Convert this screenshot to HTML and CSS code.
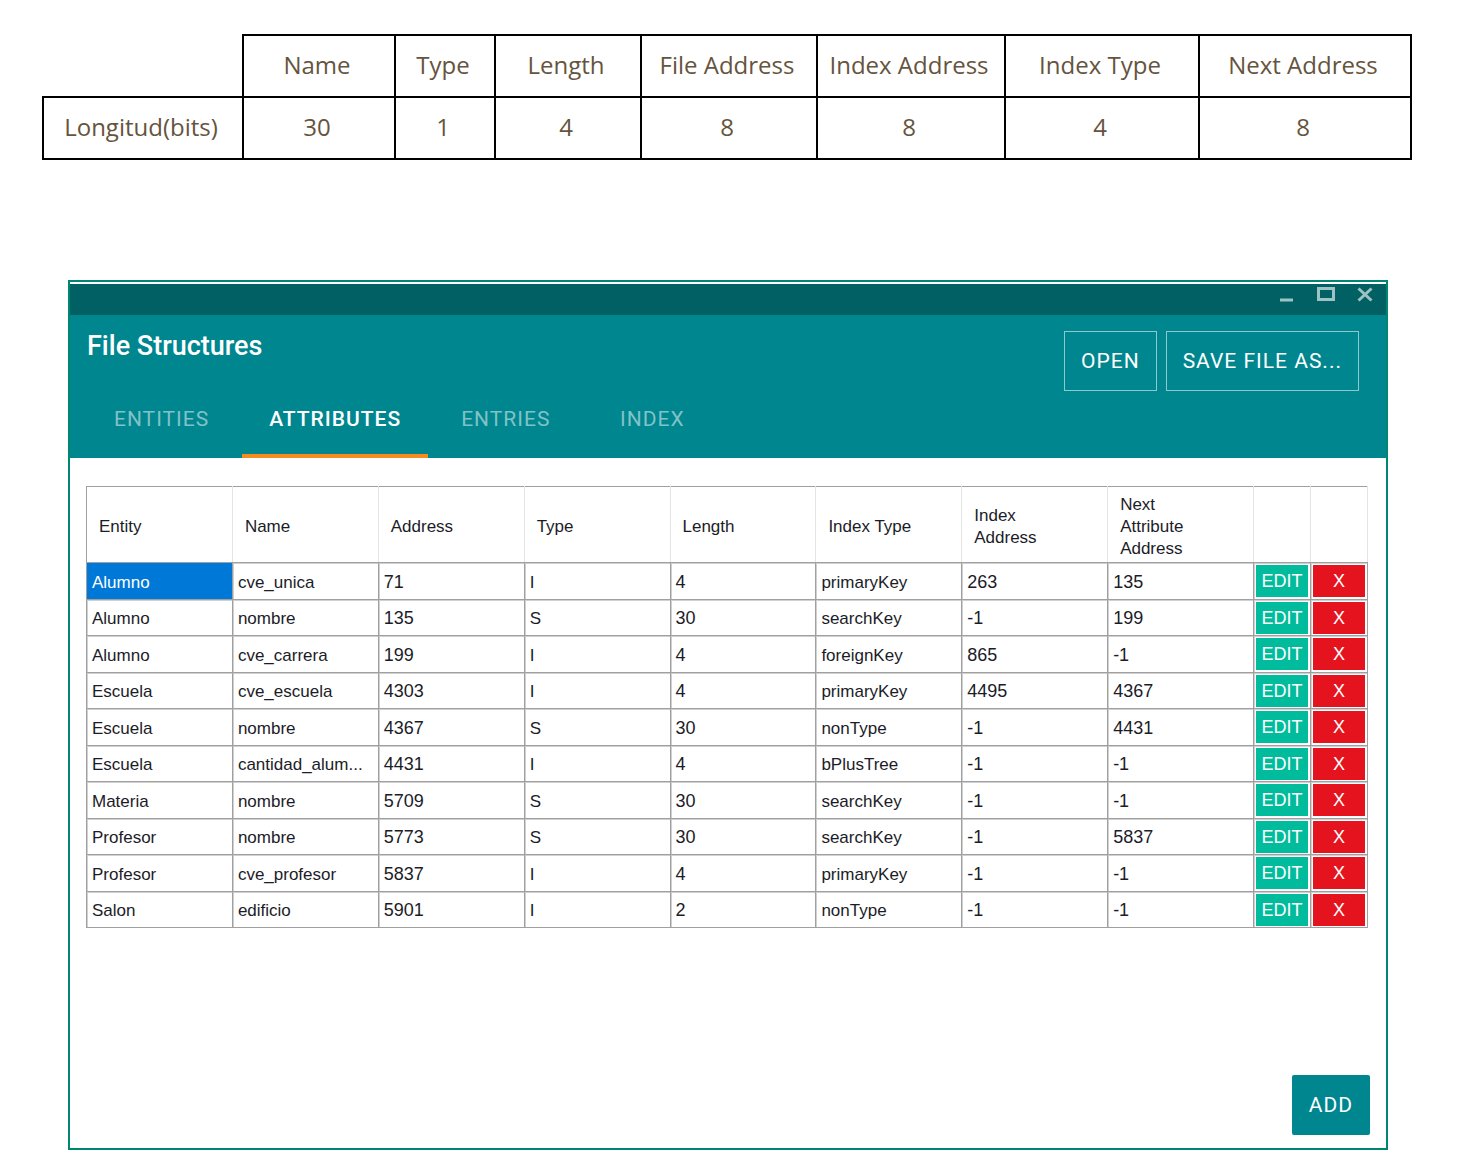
FILE: index.html
```html
<!DOCTYPE html>
<html lang="es">
<head>
<meta charset="utf-8">
<meta name="viewport" content="width=device-width, initial-scale=1">
<title>File Structures</title>
<link rel="stylesheet" href="styles.css">
</head>
<body>
<table class="layout-table">
  <colgroup>
    <col class="w-label"><col class="w-name"><col class="w-type"><col class="w-length"><col class="w-file"><col class="w-index"><col class="w-index-type"><col class="w-next">
  </colgroup>
  <thead>
    <tr><td class="blank"></td><th scope="col">Name</th><th scope="col">Type</th><th scope="col">Length</th><th scope="col">File Address</th><th scope="col">Index Address</th><th scope="col">Index Type</th><th scope="col">Next Address</th></tr>
  </thead>
  <tbody>
    <tr><th scope="row">Longitud(bits)</th><td>30</td><td>1</td><td>4</td><td>8</td><td>8</td><td>4</td><td>8</td></tr>
  </tbody>
</table>

<main class="window">
  <div class="titlebar">
    <button class="win-btn" type="button" aria-label="Minimize"><svg width="18" height="18" viewBox="0 0 18 18"><path d="M2 14h13"/></svg></button>
    <button class="win-btn" type="button" aria-label="Maximize"><svg width="18" height="18" viewBox="0 0 18 18"><path d="M1.500 2.500h15v11h-15z"/></svg></button>
    <button class="win-btn" type="button" aria-label="Close"><svg width="18" height="18" viewBox="0 0 18 18"><path d="M2.500 2.500l13 12M15.500 2.500l-13 12"/></svg></button>
  </div>
  <header class="header">
    <div class="heading">
      <h1 class="title">File Structures</h1>
      <nav class="tabs">
        <a class="tab" href="#entities">ENTITIES</a>
        <a class="tab tab-active" href="#attributes" aria-current="page">ATTRIBUTES</a>
        <a class="tab" href="#entries">ENTRIES</a>
        <a class="tab" href="#index">INDEX</a>
      </nav>
    </div>
    <div class="actions">
      <button class="btn btn-outline" type="button">OPEN</button>
      <button class="btn btn-outline" type="button">SAVE FILE AS...</button>
    </div>
  </header>
  <section class="content">
    <table class="grid">
      <colgroup><col span="8"><col class="w-action" span="2"></colgroup>
      <thead>
        <tr><th scope="col">Entity</th><th scope="col">Name</th><th scope="col">Address</th><th scope="col">Type</th><th scope="col">Length</th><th scope="col">Index Type</th><th scope="col">Index<br>Address</th><th scope="col">Next<br>Attribute<br>Address</th><td></td><td></td></tr>
      </thead>
      <tbody>
        <tr><td class="selected">Alumno</td><td>cve_unica</td><td class="num">71</td><td>I</td><td class="num">4</td><td>primaryKey</td><td class="num">263</td><td class="num">135</td><td class="act"><button class="edit" type="button">EDIT</button></td><td class="act"><button class="delete" type="button">X</button></td></tr>
        <tr><td>Alumno</td><td>nombre</td><td class="num">135</td><td>S</td><td class="num">30</td><td>searchKey</td><td class="num">-1</td><td class="num">199</td><td class="act"><button class="edit" type="button">EDIT</button></td><td class="act"><button class="delete" type="button">X</button></td></tr>
        <tr><td>Alumno</td><td>cve_carrera</td><td class="num">199</td><td>I</td><td class="num">4</td><td>foreignKey</td><td class="num">865</td><td class="num">-1</td><td class="act"><button class="edit" type="button">EDIT</button></td><td class="act"><button class="delete" type="button">X</button></td></tr>
        <tr><td>Escuela</td><td>cve_escuela</td><td class="num">4303</td><td>I</td><td class="num">4</td><td>primaryKey</td><td class="num">4495</td><td class="num">4367</td><td class="act"><button class="edit" type="button">EDIT</button></td><td class="act"><button class="delete" type="button">X</button></td></tr>
        <tr><td>Escuela</td><td>nombre</td><td class="num">4367</td><td>S</td><td class="num">30</td><td>nonType</td><td class="num">-1</td><td class="num">4431</td><td class="act"><button class="edit" type="button">EDIT</button></td><td class="act"><button class="delete" type="button">X</button></td></tr>
        <tr><td>Escuela</td><td>cantidad_alum...</td><td class="num">4431</td><td>I</td><td class="num">4</td><td>bPlusTree</td><td class="num">-1</td><td class="num">-1</td><td class="act"><button class="edit" type="button">EDIT</button></td><td class="act"><button class="delete" type="button">X</button></td></tr>
        <tr><td>Materia</td><td>nombre</td><td class="num">5709</td><td>S</td><td class="num">30</td><td>searchKey</td><td class="num">-1</td><td class="num">-1</td><td class="act"><button class="edit" type="button">EDIT</button></td><td class="act"><button class="delete" type="button">X</button></td></tr>
        <tr><td>Profesor</td><td>nombre</td><td class="num">5773</td><td>S</td><td class="num">30</td><td>searchKey</td><td class="num">-1</td><td class="num">5837</td><td class="act"><button class="edit" type="button">EDIT</button></td><td class="act"><button class="delete" type="button">X</button></td></tr>
        <tr><td>Profesor</td><td>cve_profesor</td><td class="num">5837</td><td>I</td><td class="num">4</td><td>primaryKey</td><td class="num">-1</td><td class="num">-1</td><td class="act"><button class="edit" type="button">EDIT</button></td><td class="act"><button class="delete" type="button">X</button></td></tr>
        <tr><td>Salon</td><td>edificio</td><td class="num">5901</td><td>I</td><td class="num">2</td><td>nonType</td><td class="num">-1</td><td class="num">-1</td><td class="act"><button class="edit" type="button">EDIT</button></td><td class="act"><button class="delete" type="button">X</button></td></tr>
      </tbody>
    </table>
    <button class="btn btn-add" type="button">ADD</button>
  </section>
</main>
</body>
</html>
```
FILE: styles.css
```css
* {
  box-sizing: border-box;
}

body {
  margin: 0;
  min-height: 100vh;
  padding: 34px 52px 18px 42px;
  display: flex;
  flex-direction: column;
  background: #fff;
}

button {
  margin: 0;
  padding: 0;
  border: 0;
  background: none;
  font: inherit;
  color: inherit;
  cursor: pointer;
}

/* Attribute record layout */
.layout-table {
  width: 100%;
  table-layout: fixed;
  border-collapse: collapse;
  font-family: "Open Sans", sans-serif;
  font-size: 24px;
  line-height: 32px;
  color: #65543e;
  text-align: center;
}

.layout-table th,
.layout-table td {
  height: 62px;
  padding: 0 4px 2px 0;
  border: 2px solid #000;
  font-weight: 400;
}

.layout-table .blank {
  border-top-style: hidden;
  border-left-style: hidden;
}

.w-label { width: 200px; }
.w-name { width: 152px; }
.w-type { width: 100px; }
.w-length { width: 146px; }
.w-file { width: 176px; }
.w-index { width: 188px; }
.w-index-type { width: 194px; }
.w-next { width: 212px; }

/* Application window */
.window {
  flex: 1;
  display: flex;
  flex-direction: column;
  margin: 120px 24px 0 26px;
  padding-top: 2px;
  border: 2px solid #008573;
  font-family: Roboto, sans-serif;
}

.titlebar {
  display: flex;
  justify-content: flex-end;
  gap: 21px;
  height: 31px;
  padding: 2px 12px 0 0;
  background: #006064;
}

.win-btn {
  width: 18px;
  height: 18px;
}

.win-btn svg {
  display: block;
  fill: none;
  stroke: #9fc3c5;
  stroke-width: 3;
}

.header {
  display: flex;
  justify-content: space-between;
  height: 143px;
  padding: 0 27px 0 17px;
  background: #00868f;
  color: #fff;
}

.heading {
  display: flex;
  flex-direction: column;
  justify-content: space-between;
  padding-top: 15px;
}

.title {
  margin: 0;
  font-size: 27px;
  font-weight: 500;
  line-height: 32px;
}

.tabs {
  display: flex;
  gap: 6px;
}

.tab {
  display: flex;
  justify-content: center;
  min-width: 138px;
  height: 53px;
  padding: 0 27px;
  border-bottom: 4px solid transparent;
  font-size: 21px;
  line-height: 28px;
  letter-spacing: 1px;
  color: #80c2c7;
  text-decoration: none;
}

.tab-active {
  border-bottom-color: #f68b1f;
  font-weight: 500;
  color: #fff;
}

.actions {
  display: flex;
  gap: 9px;
  padding-top: 16px;
}

.btn {
  height: 60px;
  padding: 0 16px;
  font-size: 21px;
  letter-spacing: 1px;
  color: #fff;
}

.btn-outline {
  border: 1px solid #8cc9cd;
}

.content {
  flex: 1;
  display: flex;
  flex-direction: column;
  justify-content: space-between;
  padding: 28px 16px 13px;
}

.grid {
  width: calc(100% - 2px);
  height: 442px;
  table-layout: fixed;
  border-collapse: collapse;
  font-family: "Liberation Sans", sans-serif;
  font-size: 17px;
  line-height: 22px;
  color: #1c1c28;
  text-align: left;
}

.w-action {
  width: 57px;
}

.grid th,
.grid td {
  padding: 4px 5px 0;
  border: 1px solid #a0a0a0;
  box-shadow: inset 1px 1px #d0d0d0;
  white-space: nowrap;
}

.grid thead th,
.grid thead td {
  height: 76px;
  padding: 4px 12px 0;
  border-left-color: #e4e4e4;
  border-right-color: #e4e4e4;
  box-shadow: none;
  font-weight: 400;
}

.grid thead th:first-child {
  border-left-color: #a0a0a0;
}

.grid tbody td {
  height: 36px;
}

.grid tbody .num {
  padding-top: 2px;
  font-size: 18px;
}

.grid .selected {
  background: #0078d7;
  box-shadow: none;
  color: #fff;
}

.grid tbody .act {
  padding: 2px 2px 1px;
  font-size: 18px;
}

.edit,
.delete {
  display: block;
  width: 100%;
  height: 32px;
  color: #fff;
}

.edit {
  background: #00bc9c;
}

.delete {
  background: #e5131d;
}

.btn-add {
  align-self: flex-end;
  min-width: 78px;
  border-radius: 2px;
  background: #00868f;
}
```
